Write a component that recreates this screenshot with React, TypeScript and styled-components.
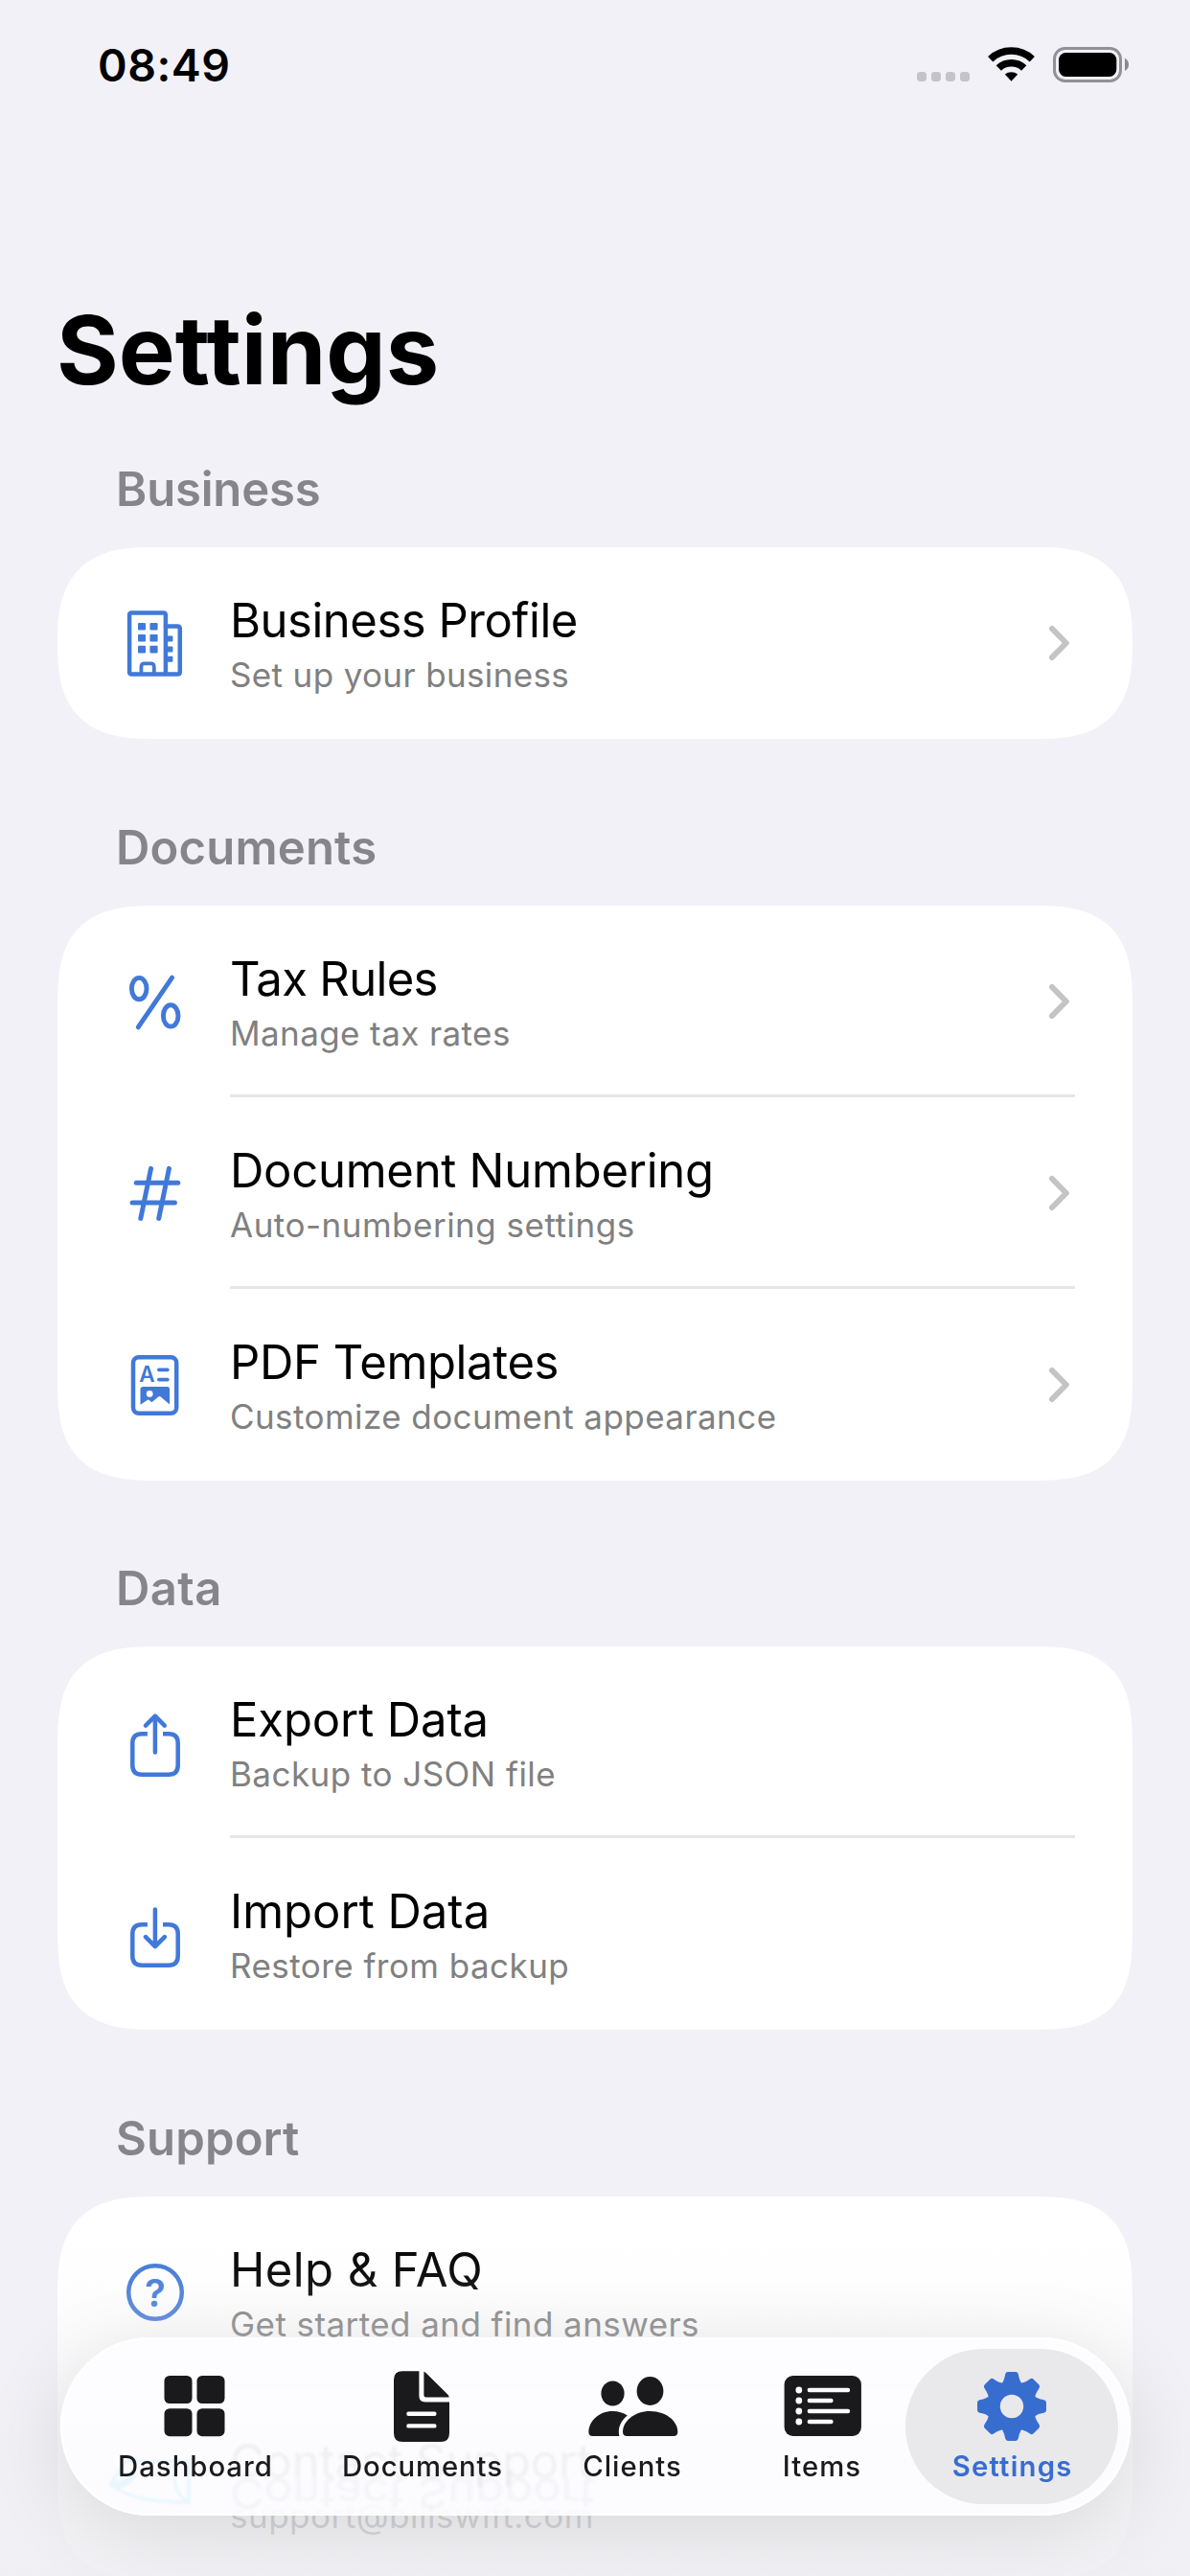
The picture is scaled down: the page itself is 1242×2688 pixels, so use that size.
import React from "react";
import styled, { createGlobalStyle } from "styled-components";

const BLUE = "#4179d8";
const INK = "#1a1a1c";

const GlobalStyle = createGlobalStyle`
  html, body { margin: 0; padding: 0; background: #f2f1f7; }
  *, *::before, *::after { box-sizing: border-box; }
`;

const Screen = styled.main`
  position: relative;
  width: 1242px;
  height: 2688px;
  overflow: hidden;
  background: #f2f1f7;
  color: #000;
  font-family: Inter, "Liberation Sans", sans-serif;
  font-kerning: normal;
`;

const StatusBar = styled.header`
  display: flex;
  justify-content: space-between;
  align-items: flex-start;
  height: 305px;
  padding: 40px 63px 0 102px;
`;

const Clock = styled.time`
  font-size: 46.5px;
  line-height: 56px;
  font-weight: 600;
  letter-spacing: 0.5px;
`;

const StatusIcons = styled.div`
  display: flex;
  gap: 19px;
  padding-top: 7px;
  svg { display: block; }
`;

const PageTitle = styled.h1`
  margin: 0;
  padding-left: 59px;
  font-size: 99px;
  line-height: 120px;
  font-weight: 700;
`;

const Sections = styled.div`
  display: flex;
  flex-direction: column;
  gap: 83.667px;
  padding: 56px 60px 0;
`;

const Section = styled.section`
  display: flex;
  flex-direction: column;
  gap: 30px;
`;

const SectionTitle = styled.h2<{ $track: number }>`
  margin: 0;
  padding-left: 61px;
  font-size: 49px;
  line-height: 60px;
  font-weight: 600;
  letter-spacing: ${(p) => p.$track}px;
  color: #86858b;
`;

const Card = styled.ul<{ $single?: boolean }>`
  margin: 0;
  padding: 0;
  list-style: none;
  background: #fff;
  border-radius: 78px;
  @supports (corner-shape: superellipse(1.5)) {
    border-radius: ${(p) => (p.$single ? 100 : 108)}px;
    corner-shape: superellipse(${(p) => (p.$single ? 1.42 : 1.55)});
  }
`;

const Row = styled.li`
  display: flex;
  height: 200px;
  padding: 0 60px 0 59px;
`;

const RowIcon = styled.svg<{ $stroke?: number }>`
  display: block;
  flex: none;
  width: 84px;
  height: 84px;
  margin: 58px 37px 0 0;
  fill: none;
  stroke: ${BLUE};
  stroke-width: ${(p) => p.$stroke ?? 4.5};
  stroke-linecap: round;
  stroke-linejoin: round;
`;

const RowBody = styled.div<{ $divided?: boolean }>`
  display: flex;
  flex: 1;
  align-items: flex-start;
  justify-content: space-between;
  border-bottom: ${(p) => (p.$divided ? "3px solid #e6e6e6" : "0")};
`;

const RowText = styled.div`
  display: flex;
  flex-direction: column;
  gap: 4px;
  padding-top: 47px;
  white-space: nowrap;
`;

const RowTitle = styled.span<{ $track: number }>`
  font-size: 49px;
  line-height: 60px;
  letter-spacing: ${(p) => p.$track}px;
`;

const RowSubtitle = styled.span<{ $track: number }>`
  font-size: 35px;
  line-height: 44px;
  letter-spacing: ${(p) => p.$track}px;
  color: #808080;
`;

const Chevron = styled.svg`
  display: block;
  width: 24px;
  height: 40px;
  margin: 80px 5px 0 0;
  fill: none;
  stroke: #c4c4c6;
  stroke-width: 6;
  stroke-linecap: round;
  stroke-linejoin: round;
`;

const Scrim = styled.div`
  position: absolute;
  inset: auto 0 0 0;
  height: 388px;
  background: linear-gradient(
    to bottom,
    rgba(240, 240, 244, 0) 0,
    rgba(240, 240, 244, 0.06) 70px,
    rgba(240, 240, 244, 0.22) 125px,
    rgba(240, 240, 244, 0.55) 240px,
    rgba(240, 240, 244, 0.76) 338px,
    rgba(240, 240, 244, 0.86) 388px
  );
`;

const TabBar = styled.nav`
  position: absolute;
  left: 62.5px;
  top: 2439px;
  display: flex;
  width: 1117px;
  height: 186px;
  padding: 12px 12.5px;
  border-radius: 93px;
  background: rgba(253, 253, 255, 0.88);
  backdrop-filter: blur(1.5px);
  box-shadow: 0 16px 84px rgba(0, 0, 0, 0.115), inset 0 0 0 2px rgba(255, 255, 255, 0.85);
`;

const Refraction = styled.div`
  position: absolute;
  inset: 0;
`;

const MirroredLabel = styled.span`
  position: absolute;
  left: 177.5px;
  top: 132px;
  font-size: 49px;
  line-height: 60px;
  white-space: nowrap;
  color: rgba(40, 40, 80, 0.035);
  transform: scaleY(-0.9);
  filter: blur(1.4px);
`;

const RefractedMail = styled.svg`
  position: absolute;
  left: 46px;
  top: 122px;
  width: 100px;
  height: 60px;
  fill: none;
  stroke: #eaf6ff;
  stroke-width: 3.6;
  filter: blur(1px);
`;

const Tab = styled.button<{ $width: number; $active?: boolean }>`
  position: relative;
  display: flex;
  flex: none;
  flex-direction: column;
  align-items: center;
  width: ${(p) => p.$width}px;
  height: 162px;
  margin: 0;
  padding: 18px 0 0;
  border: 0;
  border-radius: 81px;
  background: ${(p) => (p.$active ? "#e9e9eb" : "transparent")};
  color: ${(p) => (p.$active ? "#386dd0" : INK)};
  font-family: inherit;
`;

const TabIcon = styled.svg`
  display: block;
  flex: none;
  width: 100px;
  height: 84px;
  fill: currentColor;
`;

const TabLabel = styled.span<{ $track: number; $bold?: boolean }>`
  margin-top: 3px;
  padding-left: ${(p) => p.$track}px;
  font-size: 29.3px;
  line-height: 36px;
  font-weight: ${(p) => (p.$bold ? 600 : 500)};
  letter-spacing: ${(p) => p.$track}px;
`;

const BuildingIcon = () => (
  <RowIcon viewBox="0 0 84 84">
    <rect x="16.1" y="10.4" width="37.8" height="64.2" rx="2" />
    <path d="M54 24.4H66.2Q68.8 24.4 68.8 27V72Q68.8 74.6 66.2 74.6H54" />
    <path d="M28.4 73V67.5Q28.4 63.4 31 63.4H39.2Q41.8 63.4 41.8 67.5V73" strokeWidth="3.8" strokeLinecap="butt" />
    <g fill={BLUE} stroke="none">
      {[21, 33, 44.8].map((y) => (
        <React.Fragment key={y}>
          <rect x="25" y={y} width="8" height="7.6" rx="1" />
          <rect x="37.4" y={y} width="8.2" height="7.6" rx="1" />
        </React.Fragment>
      ))}
      {[34.6, 45.4, 55.8].map((y) => (
        <rect key={y} x="54" y={y} width="7.4" height="6" rx="1" />
      ))}
    </g>
  </RowIcon>
);

const PercentIcon = () => (
  <RowIcon viewBox="0 0 84 84" $stroke={4.9}>
    <ellipse cx="26.2" cy="28.6" rx="7.8" ry="11.2" />
    <ellipse cx="59.2" cy="56.9" rx="7.8" ry="11.2" />
    <path d="M60.6 17.2L25.2 68.8" />
  </RowIcon>
);

const HashIcon = () => (
  <RowIcon viewBox="0 0 84 84" $stroke={5}>
    <path d="M38.5 16.4L27.8 68.4M57.4 16.4L46.7 68.4M23.2 31.3H66.8M19.1 52H63.4" />
  </RowIcon>
);

const TemplateIcon = () => (
  <RowIcon viewBox="0 0 84 84">
    <rect x="20" y="13.2" width="45.2" height="58.6" rx="6" />
    <path d="M46.9 26.3H55.8M46.9 36.6H55.8" strokeWidth="3.8" />
    <text x="34.5" y="39" textAnchor="middle" fontSize="22.5" fontWeight="600" fill={BLUE} stroke="none">A</text>
    <path
      d="M30.5 44H55.5Q58 44 58 46.5V62.4L49 54.8Q47.5 53.4 46 54.8L39.4 60.2L37 58.2Q35.8 57 34.4 58.2L27.5 62.8V46.5Q27.5 44 30.5 44Z"
      fill={BLUE}
      stroke="none"
    />
    <circle cx="37.2" cy="51.4" r="3.4" fill="#fff" stroke="none" />
  </RowIcon>
);

const ExportIcon = () => (
  <RowIcon viewBox="0 0 84 84">
    <path d="M34.9 33.2H29Q19.3 33.2 19.3 42.9V66Q19.3 75.7 29 75.7H57Q66.7 75.7 66.7 66V42.9Q66.7 33.2 57 33.2H51" strokeLinecap="butt" />
    <path d="M42.9 15V52.6M33 24.6L42.9 14.6L52.8 24.6" />
  </RowIcon>
);

const ImportIcon = () => (
  <RowIcon viewBox="0 0 84 84">
    <path d="M34.9 32.3H29Q19.3 32.3 19.3 42V65.1Q19.3 74.8 29 74.8H57Q66.7 74.8 66.7 65.1V42Q66.7 32.3 57 32.3H51" strokeLinecap="butt" />
    <path d="M42.9 16.6V54M33 45.2L42.9 55.2L52.8 45.2" />
  </RowIcon>
);

const HelpIcon = () => (
  <RowIcon viewBox="0 0 84 84">
    <circle cx="43" cy="42" r="27.8" />
    <text x="42.9" y="56.8" textAnchor="middle" fontSize="40" fontWeight="600" fill={BLUE} stroke="none">?</text>
  </RowIcon>
);

const BlankIcon = () => <RowIcon viewBox="0 0 84 84" />;

const DashboardGlyph = () => (
  <TabIcon viewBox="0 0 100 84">
    <rect x="17.5" y="10" width="29" height="29" rx="5.5" />
    <rect x="51.5" y="10" width="29" height="29" rx="5.5" />
    <rect x="17.5" y="44.2" width="29" height="29" rx="5.5" />
    <rect x="51.5" y="44.2" width="29" height="29" rx="5.5" />
  </TabIcon>
);

const DocumentGlyph = () => (
  <TabIcon viewBox="0 0 100 84">
    <path d="M29 5.3H46.4V31Q46.4 37.5 52.8 37.5H78V70Q78 79 69 79H29Q20 79 20 70V14.3Q20 5.3 29 5.3Z" />
    <path d="M51.4 5.8Q53 6.4 54 7.4L76.2 29.6Q77.4 30.8 77.8 32.4H53.6Q51.4 32.4 51.4 30.2Z" />
    <path d="M35.4 49.7H62.4M35.4 62.4H62.4" stroke="#fcfcfe" strokeWidth="4.4" strokeLinecap="round" />
  </TabIcon>
);

const ClientsGlyph = () => (
  <TabIcon viewBox="0 0 100 84">
    <ellipse cx="29.5" cy="28.5" rx="12.1" ry="13" />
    <ellipse cx="68.5" cy="26" rx="13.9" ry="15" />
    <path d="M8.5 73Q4.4 73 4.4 69C4.4 57.5 15 47 29.5 47C35.4 47 40.4 48.6 44.8 51.4C37.6 57.4 34.4 65 36.4 73Z" />
    <path d="M44.4 73Q40 73 40 68.8C40 57.5 52 47 68.5 47C85 47 97.3 57.5 97.3 68.8Q97.3 73 93 73Z" />
  </TabIcon>
);

const ItemsGlyph = () => (
  <TabIcon viewBox="0 0 100 84">
    <rect x="10.6" y="10" width="80.3" height="63" rx="9" />
    <g fill="#fcfcfe">
      {[25, 36, 47, 58].map((y, i) => (
        <React.Fragment key={y}>
          <circle cx="25.8" cy={y} r="3.4" />
          <rect x="34.6" y={y - 2.2} width={i % 2 ? 27 : 44.6} height="4.4" rx="2.2" />
        </React.Fragment>
      ))}
    </g>
  </TabIcon>
);

const GearGlyph = () => (
  <TabIcon viewBox="0 0 100 84">
    <g transform="translate(50 42)">
      {[0, 45, 90, 135, 180, 225, 270, 315].map((a) => (
        <path
          key={a}
          d="M-11.5 -20L-9.4 -25.5Q-8.4 -27 -7.6 -30L-6.8 -33.6Q-6.3 -36 -4 -36H4Q6.3 -36 6.8 -33.6L7.6 -30Q8.4 -27 9.4 -25.5L11.5 -20Z"
          transform={`rotate(${a})`}
        />
      ))}
      <path fillRule="evenodd" d="M0 -26.5A26.5 26.5 0 1 1 0 26.5A26.5 26.5 0 1 1 0 -26.5ZM0 -12.2A12.2 12.2 0 1 0 0 12.2A12.2 12.2 0 1 0 0 -12.2Z" />
    </g>
  </TabIcon>
);

type Item = {
  icon: React.FC;
  title: string;
  titleTrack: number;
  subtitle: string;
  subtitleTrack: number;
  link?: boolean;
};

const SECTIONS: { name: string; track: number; items: Item[] }[] = [
  {
    name: "Business",
    track: -0.17,
    items: [
      { icon: BuildingIcon, title: "Business Profile", titleTrack: -0.48, subtitle: "Set up your business", subtitleTrack: 0.36, link: true },
    ],
  },
  {
    name: "Documents",
    track: 0.18,
    items: [
      { icon: PercentIcon, title: "Tax Rules", titleTrack: -0.68, subtitle: "Manage tax rates", subtitleTrack: 0.4, link: true },
      { icon: HashIcon, title: "Document Numbering", titleTrack: -0.26, subtitle: "Auto-numbering settings", subtitleTrack: 0.5, link: true },
      { icon: TemplateIcon, title: "PDF Templates", titleTrack: -0.38, subtitle: "Customize document appearance", subtitleTrack: 0.43, link: true },
    ],
  },
  {
    name: "Data",
    track: 0.4,
    items: [
      { icon: ExportIcon, title: "Export Data", titleTrack: -0.12, subtitle: "Backup to JSON file", subtitleTrack: 0.46 },
      { icon: ImportIcon, title: "Import Data", titleTrack: 0, subtitle: "Restore from backup", subtitleTrack: 0.45 },
    ],
  },
  {
    name: "Support",
    track: 0.15,
    items: [
      { icon: HelpIcon, title: "Help & FAQ", titleTrack: 0.4, subtitle: "Get started and find answers", subtitleTrack: 0.43 },
      { icon: BlankIcon, title: "Contact Support", titleTrack: -0.2, subtitle: "support@billswift.com", subtitleTrack: 0.5 },
    ],
  },
];

const TABS = [
  { label: "Dashboard", glyph: DashboardGlyph, width: 257, track: 1 },
  { label: "Documents", glyph: DocumentGlyph, width: 217, track: 0.9 },
  { label: "Clients", glyph: ClientsGlyph, width: 221, track: 1 },
  { label: "Items", glyph: ItemsGlyph, width: 175, track: 1.05 },
  { label: "Settings", glyph: GearGlyph, width: 222, track: 1.2, active: true },
];

export default function App() {
  return (
    <Screen>
      <GlobalStyle />
      <StatusBar>
        <Clock>08:49</Clock>
        <StatusIcons>
          <svg width="55" height="40" viewBox="0 0 55 40" fill="#c4c3c8">
            {[0, 15, 30, 45].map((x) => (
              <rect key={x} x={x} y="28" width="10" height="10" rx="3.4" />
            ))}
          </svg>
          <svg width="49" height="40" viewBox="0 0 49 40" fill="none" stroke="#000" strokeWidth="7.6">
            <path d="M2.7 14.7A31.8 31.8 0 0 1 46.3 14.7" />
            <path d="M11.3 24A19.2 19.2 0 0 1 37.7 24" />
            <path d="M17.8 30.6A10.4 10.4 0 0 1 31.2 30.6L24.5 37.8Z" fill="#000" stroke="none" />
          </svg>
          <svg width="80" height="40" viewBox="0 0 80 40">
            <rect x="1.5" y="3.5" width="69" height="34" rx="11" fill="none" stroke="#919095" strokeWidth="3" />
            <rect x="6" y="8" width="60.3" height="25" rx="7.5" />
            <path d="M75 13.8Q79 16 79 20.4Q79 24.8 75 27Z" fill="#8a898e" />
          </svg>
        </StatusIcons>
      </StatusBar>
      <PageTitle>Settings</PageTitle>
      <Sections>
        {SECTIONS.map(({ name, track, items }) => (
          <Section key={name}>
            <SectionTitle $track={track}>{name}</SectionTitle>
            <Card $single={items.length === 1}>
              {items.map(({ icon: Icon, ...item }, i) => (
                <Row key={item.title}>
                  <Icon />
                  <RowBody $divided={i < items.length - 1}>
                    <RowText>
                      <RowTitle $track={item.titleTrack}>{item.title}</RowTitle>
                      <RowSubtitle $track={item.subtitleTrack}>{item.subtitle}</RowSubtitle>
                    </RowText>
                    {item.link && (
                      <Chevron viewBox="0 0 24 40">
                        <path d="M5 5L19.8 20L5 35" />
                      </Chevron>
                    )}
                  </RowBody>
                </Row>
              ))}
            </Card>
          </Section>
        ))}
      </Sections>
      <Scrim />
      <TabBar>
        <Refraction aria-hidden>
          <MirroredLabel>Contact Support</MirroredLabel>
          <RefractedMail viewBox="0 0 100 60">
            <path d="M22 7H88V50C58 50 26 48 6 31C12 24 16 16 22 7ZM88 50C74 42 70 28 74 8" />
            <path d="M8 30C16 34 28 30 30 18" strokeWidth="8" />
          </RefractedMail>
        </Refraction>
        {TABS.map(({ label, glyph: Glyph, width, track, active }) => (
          <Tab key={label} $width={width} $active={active}>
            <Glyph />
            <TabLabel $track={track} $bold={active}>{label}</TabLabel>
          </Tab>
        ))}
      </TabBar>
    </Screen>
  );
}
